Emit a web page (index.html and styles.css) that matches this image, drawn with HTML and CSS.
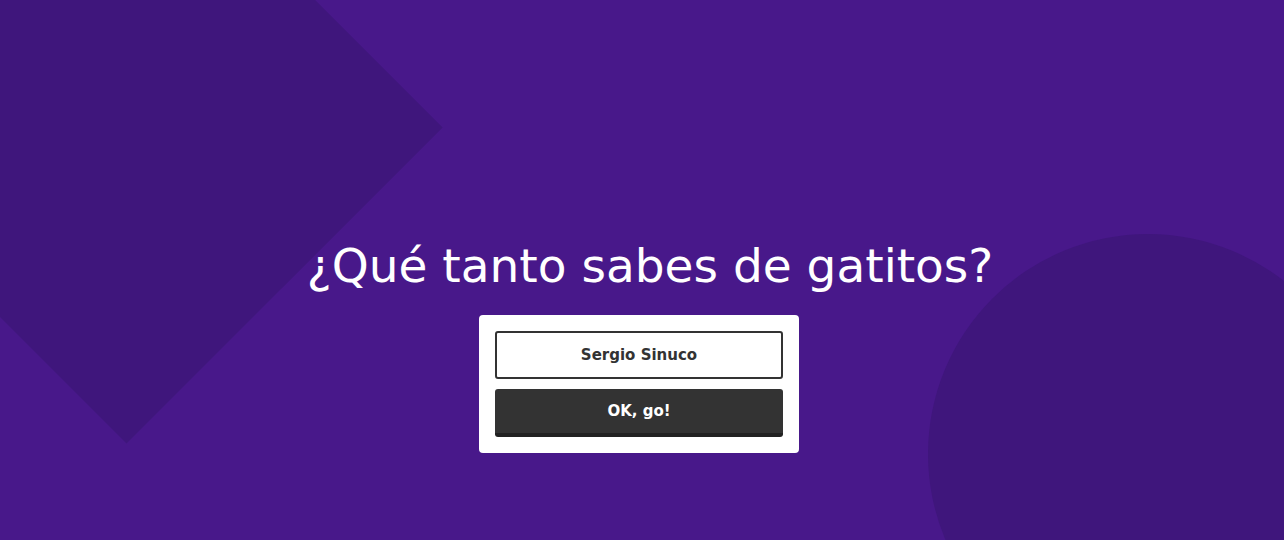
FILE: index.html
```html
<!DOCTYPE html>
<html lang="es">
<head>
<meta charset="utf-8">
<title>Gatitos</title>
<link rel="stylesheet" href="styles.css">
</head>
<body>
<div class="bg">
  <div class="shape diamond"></div>
  <div class="shape circle"></div>
</div>
<main class="main">
  <h1 class="title">¿Qué tanto sabes de gatitos?</h1>
  <form class="card">
    <input class="name-input" type="text" value="Sergio Sinuco">
    <button class="go-btn" type="button">OK, go!</button>
  </form>
</main>
</body>
</html>
```
FILE: styles.css
```css
html, body {
  margin: 0;
  padding: 0;
  height: 100%;
}
body {
  background: #48188a;
  overflow: hidden;
  position: relative;
  font-family: "DejaVu Sans", sans-serif;
}
.bg {
  position: absolute;
  inset: 0;
  overflow: hidden;
  z-index: 0;
}
.shape {
  position: absolute;
  background: #3f167c;
}
.diamond {
  width: 447px;
  height: 447px;
  left: -97px;
  top: -96px;
  transform: rotate(45deg);
}
.circle {
  width: 440px;
  height: 440px;
  border-radius: 50%;
  left: 928px;
  top: 234px;
}
.main {
  position: relative;
  z-index: 1;
  display: flex;
  flex-direction: column;
  align-items: center;
  padding: 237px 6px 0 0;
}
.title {
  margin: 0 0 20px 22px;
  font-family: "DejaVu Sans", sans-serif;
  font-weight: normal;
  font-size: 47px;
  line-height: 58px;
  color: #ffffff;
}
.card {
  width: 288px;
  padding: 16px;
  background: #ffffff;
  border-radius: 4px;
  display: flex;
  flex-direction: column;
  gap: 10px;
  margin: 0;
}
.name-input {
  box-sizing: border-box;
  width: 100%;
  height: 48px;
  border: 2px solid #333333;
  border-radius: 3px;
  text-align: center;
  font-family: "DejaVu Sans", sans-serif;
  font-weight: bold;
  font-size: 15px;
  color: #333333;
  background: #ffffff;
  outline: none;
  padding: 0;
}
.go-btn {
  box-sizing: border-box;
  width: 100%;
  height: 48px;
  border: none;
  border-bottom: 4px solid #222222;
  border-radius: 3px;
  background: #333333;
  color: #ffffff;
  font-family: "DejaVu Sans", sans-serif;
  font-weight: bold;
  font-size: 15px;
  padding: 0;
  cursor: pointer;
}
```
